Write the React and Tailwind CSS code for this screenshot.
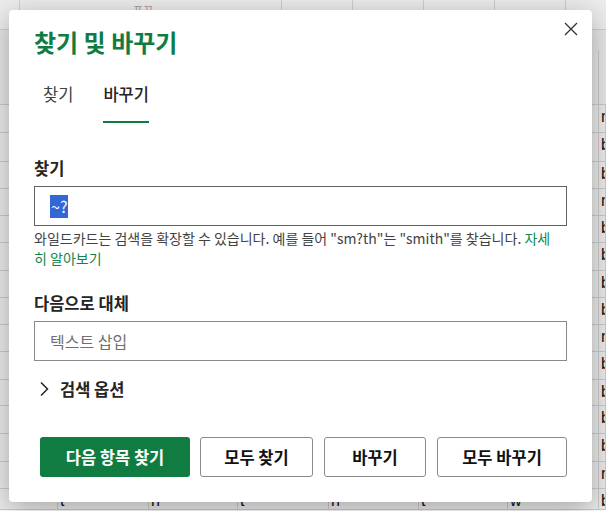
import React from "react";

const rowHeights = [28, 29, 27, 27, 27, 28, 27, 27, 27, 28, 26, 28, 28, 27, 21];
const rightLetters = ["n", "b", "b", "n", "b", "b", "b", "b", "n", "b", "b", "b", "b", "n", "b"];
const colWidths = [58, 91, 89, 91, 90, 89, 91, 7];
const bottomLetters = ["", "t", "n", "t", "n", "t", "w", "b"];

function Background() {
  return (
    <div className="flex flex-col w-[606px] h-[511px]">
      <div className="flex h-[30px] bg-[#ededed] border-b border-[#cfcfcf]">
        <div className="w-[20px] border-r border-[#cfcfcf]" />
        <div className="w-[262px] border-r border-[#cfcfcf] relative">
          <span className="absolute left-[113px] top-[2px] text-[11px] text-[#9a9a9a]">표꾸</span>
        </div>
        <div className="w-[71px] border-r border-[#cfcfcf]" />
        <div className="w-[71px] border-r border-[#cfcfcf]" />
        <div className="w-[71px] border-r border-[#cfcfcf]" />
        <div className="w-[71px] border-r border-[#cfcfcf]" />
        <div className="flex-1" />
      </div>
      <div className="flex h-[75px] bg-[#e6e6e6] border-b border-[#c9c9c9]">
        <div className="w-[598px]" />
        <div className="flex-1 border-l border-[#c9c9c9] mt-[20px]" />
      </div>
      {rowHeights.map((h, i) => (
        <div
          key={i}
          className="flex bg-[#ebebeb] border-b border-[#cacaca]"
          style={{ height: h }}
        >
          {colWidths.map((w, j) => (
            <div
              key={j}
              className="border-r border-[#cacaca] text-[16px] leading-[24px] pl-[2px] text-[#111111] overflow-hidden whitespace-nowrap shrink-0"
              style={{ width: w, fontFamily: '"Liberation Sans", sans-serif' }}
            >
              {i === rowHeights.length - 1 ? bottomLetters[j] : j === 7 ? rightLetters[i] : ""}
            </div>
          ))}
        </div>
      ))}
    </div>
  );
}

function CloseIcon() {
  return (
    <svg width="14" height="14" viewBox="0 0 14 14" fill="none">
      <path d="M1 1 L13 13 M13 1 L1 13" stroke="#333333" strokeWidth="1.3" />
    </svg>
  );
}

function Chevron() {
  return (
    <svg width="10" height="16" viewBox="0 0 10 16" fill="none">
      <path d="M2 1.5 L8.5 8 L2 14.5" stroke="#242424" strokeWidth="1.5" />
    </svg>
  );
}

export default function App() {
  return (
    <div
      className="relative w-[606px] h-[511px] overflow-hidden"
      style={{ fontFamily: '"Noto Sans CJK KR", "Noto Sans", sans-serif' }}
    >
      <Background />
      <div className="absolute left-[9px] top-[10px] w-[583px] h-[492px] bg-white rounded-[4px] shadow-[0_6px_28px_rgba(0,0,0,0.30)] flex flex-col px-[25px] pt-[16px] pb-[25px]">
        <button className="absolute right-[14px] top-[12px] w-[14px] h-[14px] flex items-center justify-center">
          <CloseIcon />
        </button>
        <h1 className="text-[24px] leading-[32px] font-bold text-[#107c41]">찾기 및 바꾸기</h1>

        <div className="flex gap-[12px] mt-[24px] text-[16.5px] leading-[24px]">
          <div className="px-[9px] text-[#424242]">찾기</div>
          <div className="px-[9px] text-[#242424] font-medium">
            <div className="pb-[15px] border-b-2 border-[#107c41]">바꾸기</div>
          </div>
        </div>

        <div className="mt-[33px] text-[16.5px] leading-[24px] font-semibold text-[#242424]">찾기</div>
        <div className="mt-[6px] h-[40px] border border-[#616161] flex items-center pl-[15px]">
          <span className="bg-[#3367d6] text-white text-[16px] leading-[23px] px-[1px]">~?</span>
        </div>
        <p className="mt-[2px] text-[14px] leading-[20px] text-[#424242] whitespace-nowrap">
          와일드카드는 검색을 확장할 수 있습니다. 예를 들어 "sm?th"는 "smith"를 찾습니다.{" "}
          <a className="text-[#13854a]">
            자세
            <br />
            히 알아보기
          </a>
        </p>

        <div className="mt-[23px] text-[16.5px] leading-[24px] font-semibold text-[#242424]">다음으로 대체</div>
        <div className="mt-[6px] h-[40px] border border-[#8a8a8a] flex items-center pl-[15px]">
          <span className="text-[16px] text-[#707070]">텍스트 삽입</span>
        </div>

        <div className="mt-[16px] flex items-center h-[24px] pl-[5px] gap-[11px]">
          <Chevron />
          <span className="text-[16.5px] leading-[24px] font-semibold text-[#242424]">검색 옵션</span>
        </div>

        <div className="mt-[36px] flex justify-end gap-[10px]">
          <button className="w-[150px] h-[40px] rounded-[3px] bg-[#107c41] text-white text-[16.5px] font-bold">다음 항목 찾기</button>
          <button className="w-[113px] h-[40px] rounded-[3px] border border-[#8a8a8a] bg-white text-[#111] text-[16.5px] font-bold">모두 찾기</button>
          <button className="w-[102px] h-[40px] rounded-[3px] border border-[#8a8a8a] bg-white text-[#111] text-[16.5px] font-bold ml-[1px]">바꾸기</button>
          <button className="w-[130px] h-[40px] rounded-[3px] border border-[#8a8a8a] bg-white text-[#111] text-[16.5px] font-bold ml-[1px]">모두 바꾸기</button>
        </div>
      </div>
    </div>
  );
}
